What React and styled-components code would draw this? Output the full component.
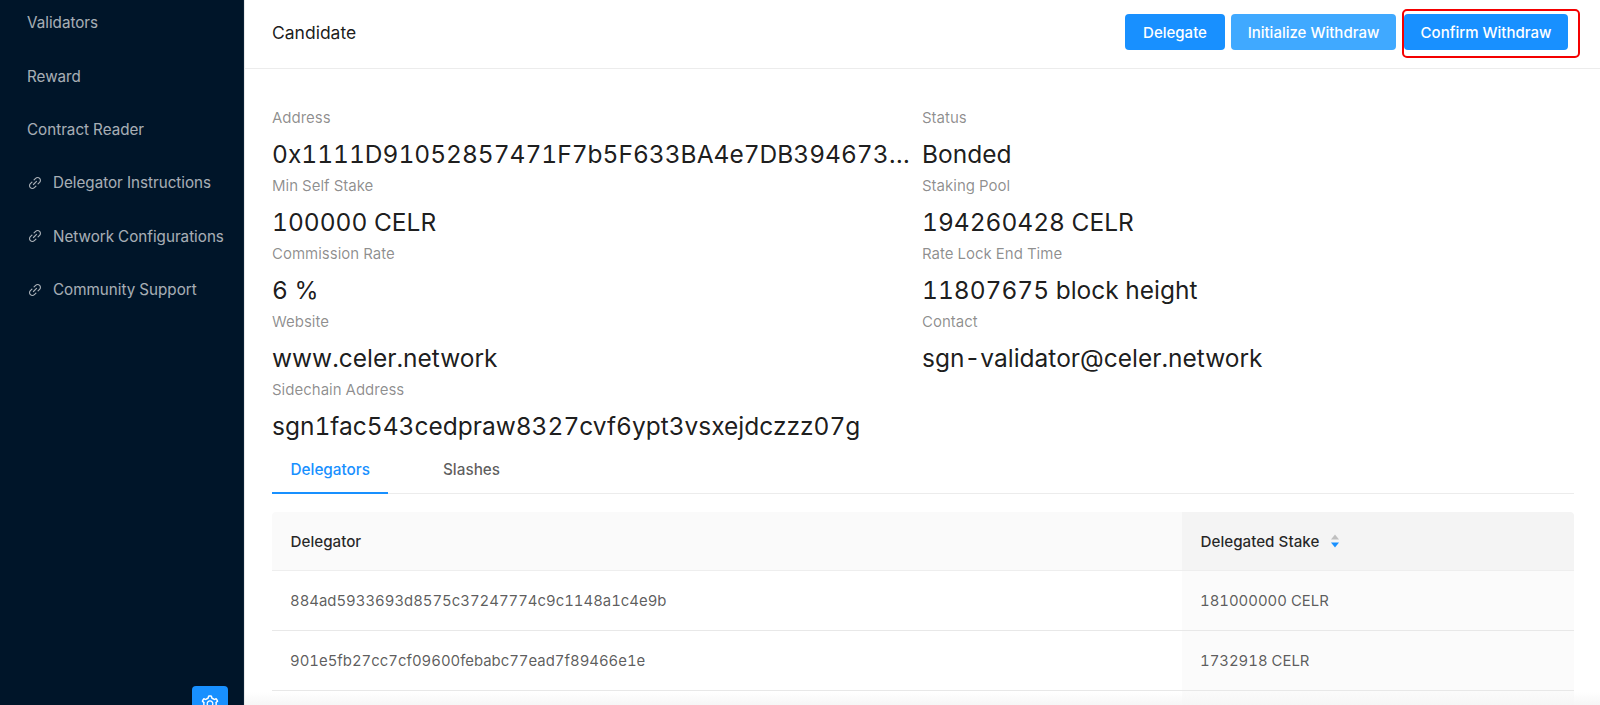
import React from "react";
import styled, { createGlobalStyle } from "styled-components";
import { AiOutlineLink, AiOutlineSetting } from "react-icons/ai";

const Global = createGlobalStyle`
  html, body { margin: 0; padding: 0; height: 705px; overflow: hidden; background: #fff; }
  body { font-family: Inter, "Liberation Sans", sans-serif; font-size: 15.2px; color: rgba(0,0,0,.85); font-variant-numeric: tabular-nums; }
  * { box-sizing: border-box; }
`;
const Page = styled.div`display: flex; height: 705px; overflow: hidden;`;
const Sider = styled.aside`
  position: relative; flex: 0 0 244px; background: #001529; border-right: 1px solid #0a2136;
`;
const Menu = styled.nav`display: flex; flex-direction: column; margin-top: -4px;`;
const MenuItem = styled.div`
  display: flex; align-items: center; gap: 10px; height: 53.4px; padding-left: 27px;
  color: rgba(255,255,255,.67); font-size: 15.2px; white-space: nowrap;
  svg { font-size: 16px; }
`;
const GearButton = styled.button`
  position: absolute; left: 192px; top: 686px; width: 36px; height: 36px; border: 0; border-radius: 4px;
  background: #1890ff; color: #fff; display: flex; justify-content: center; align-items: flex-start; padding: 8px 0 0;
  svg { font-size: 20px; }
`;
const Main = styled.main`position: relative; flex: 1; min-width: 0; display: flex; flex-direction: column; border-left: 1px solid #e8e8e8;`;
const Header = styled.header`
  flex: none; display: flex; align-items: center; justify-content: space-between; height: 69px; padding: 0 32px 4px 27px;
  border-bottom: 1px solid #ececec;
`;
const Title = styled.h1`margin: 0; font-size: 17.5px; font-weight: 400; color: rgba(0,0,0,.9);`;
const Actions = styled.div`display: flex; gap: 6px; position: relative; align-items: center;`;
const Btn = styled.button`
  height: 36px; border: 0; border-radius: 4px; margin-left: ${p => p.$ml || 0}px; padding: 0;
  background: ${p => (p.$light ? "#40a9ff" : "#1890ff")}; color: #fff; font: 500 15px Inter, "Liberation Sans", sans-serif;
  white-space: nowrap; width: ${p => p.$w}px;
`;
const Highlight = styled.div`
  position: absolute; right: -12px; top: -5px; width: 178px; height: 49px; border: 2.5px solid #f40000; border-radius: 5px; pointer-events: none;
`;
const Body = styled.section`flex: none; padding: 38px 26px 0 27px;`;
const Stats = styled.div`display: grid; grid-template-columns: 650px 1fr;`;
const Stat = styled.div`min-width: 0; height: 68px;`;
const Label = styled.div`font-size: 15px; line-height: 22px; color: rgba(0,0,0,.45); margin-bottom: 8px;`;
const Value = styled.div`
  font-size: 24.5px; line-height: 36px; margin-top: -1px; color: rgba(0,0,0,.9); white-space: nowrap; overflow: hidden; text-overflow: ellipsis;
  font-variation-settings: "opsz" 32;
`;
const Tabs = styled.div`display: flex; gap: 36px; border-bottom: 1px solid #ececec; height: 46px; margin-top: 1px;`;
const Tab = styled.div`
  padding: 0 18.5px; line-height: 44px; font-weight: 500; font-size: 15.3px;
  color: ${p => (p.$active ? "#1890ff" : "rgba(0,0,0,.65)")};
  border-bottom: 2px solid ${p => (p.$active ? "#1890ff" : "transparent")}; height: 46px;
`;
const Table = styled.div`margin-top: 18px; display: grid; grid-template-columns: 910px 1fr; border-radius: 4px 4px 0 0; overflow: hidden;`;
const Th = styled.div`
  height: 59px; display: flex; align-items: center; gap: 11px; padding-left: 18.5px; font-weight: 500;
  background: ${p => (p.$sorted ? "#f4f4f4" : "#fafafa")}; border-bottom: 1px solid #eee; color: rgba(0,0,0,.85);
`;
const Td = styled.div`
  height: 60px; display: flex; align-items: center; padding-left: 18px; font-size: 14.9px; color: rgba(0,0,0,.65);
  background: ${p => (p.$sorted ? "#fbfbfb" : "#fff")}; border-bottom: 1px solid #e8e8e8;
`;
const BottomFade = styled.div`
  position: absolute; left: 0; right: 0; bottom: 0; height: 13px; pointer-events: none;
  background: linear-gradient(to bottom, rgba(245,245,245,0), rgba(245,245,245,.9));
`;
const SortCarets = () => (
  <svg width="10" height="16" viewBox="0 0 10 16" aria-hidden="true">
    <path d="M5 1.5 9 6.5H1z" fill="#bfbfbf" />
    <path d="M5 14.5 9 9.5H1z" fill="#1890ff" />
  </svg>
);

const stats = [
  ["Address", "0x1111D91052857471F7b5F633BA4e7DB39467390E"], ["Status", "Bonded"],
  ["Min Self Stake", "100000 CELR"], ["Staking Pool", "194260428 CELR"],
  ["Commission Rate", "6 %"], ["Rate Lock End Time", "11807675 block height"],
  ["Website", "www.celer.network"], ["Contact", "sgn-validator@celer.network"],
  ["Sidechain Address", "sgn1fac543cedpraw8327cvf6ypt3vsxejdczzz07g"],
];
const rows = [
  ["884ad5933693d8575c37247774c9c1148a1c4e9b", "181000000 CELR"],
  ["901e5fb27cc7cf09600febabc77ead7f89466e1e", "1732918 CELR"],
  ["", ""],
];

export default function App() {
  return (
    <Page>
      <Global />
      <Sider>
        <Menu>
          <MenuItem>Validators</MenuItem>
          <MenuItem>Reward</MenuItem>
          <MenuItem>Contract Reader</MenuItem>
          {["Delegator Instructions", "Network Configurations", "Community Support"].map(t => (
            <MenuItem key={t}><AiOutlineLink />{t}</MenuItem>
          ))}
        </Menu>
        <GearButton aria-label="Settings"><AiOutlineSetting /></GearButton>
      </Sider>
      <Main>
        <Header>
          <Title>Candidate</Title>
          <Actions>
            <Btn $w={100}>Delegate</Btn>
            <Btn $w={165} $light>Initialize Withdraw</Btn>
            <Btn $w={164} $ml={2}>Confirm Withdraw</Btn>
            <Highlight />
          </Actions>
        </Header>
        <Body>
          <Stats>
            {stats.map(([l, v]) => (
              <Stat key={l}><Label>{l}</Label><Value>{v}</Value></Stat>
            ))}
          </Stats>
          <Tabs>
            <Tab $active>Delegators</Tab>
            <Tab>Slashes</Tab>
          </Tabs>
          <Table>
            <Th>Delegator</Th>
            <Th $sorted>Delegated Stake <SortCarets /></Th>
            {rows.map(([a, b], i) => (
              <React.Fragment key={i}>
                <Td>{a}</Td>
                <Td $sorted>{b}</Td>
              </React.Fragment>
            ))}
          </Table>
        </Body>
        <BottomFade />
      </Main>
    </Page>
  );
}
